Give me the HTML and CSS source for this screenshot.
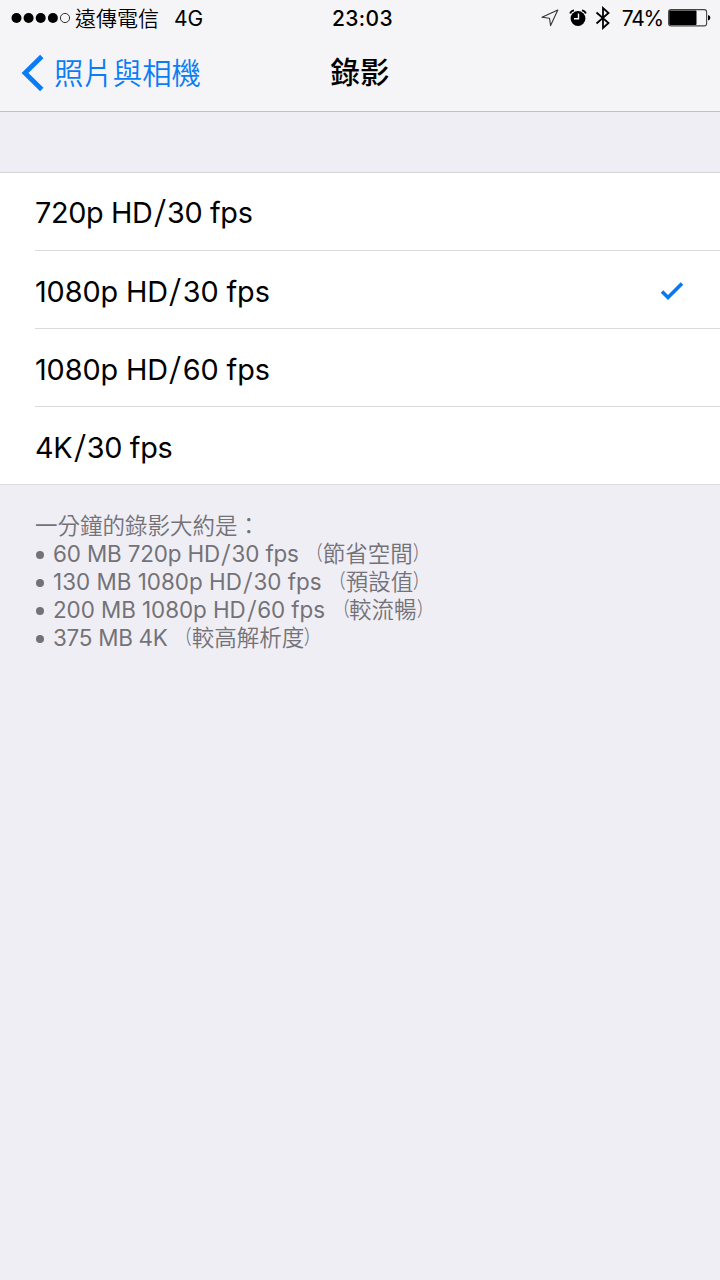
FILE: index.html
```html
<!DOCTYPE html>
<html lang="zh-Hant">
<head>
<meta charset="utf-8">
<title>錄影</title>
<link rel="stylesheet" href="styles.css">
</head>
<body>
<header class="header">
  <div class="status">
    <div class="status-left">
      <svg class="signal" width="60" height="12" viewBox="0 0 60 12">
        <circle cx="5.5" cy="6" r="5"/><circle cx="17.6" cy="6" r="5"/><circle cx="29.7" cy="6" r="5"/><circle cx="41.9" cy="6" r="5"/>
        <circle class="signal-empty" cx="54" cy="6" r="4.6"/>
      </svg>
      <span class="carrier">遠傳電信</span>
      <span class="network">4G</span>
    </div>
    <div class="clock">23:03</div>
    <div class="status-right">
      <svg class="location" width="18" height="18" viewBox="0 0 18 18"><path d="M16.8 1 L1 8.2 L8.5 9.2 L9.6 16.6 Z"/></svg>
      <svg class="alarm" width="18" height="18" viewBox="0 0 18 18">
        <circle cx="9" cy="9.5" r="7.4"/>
        <path class="alarm-bell" d="M1.2 4.5 Q2 1.8 5 1.4 M16.8 4.5 Q16 1.8 13 1.4"/>
        <path class="alarm-hand" d="M9.5 4.5 V9.8 H5"/>
      </svg>
      <svg class="bluetooth" width="16" height="24" viewBox="0 0 16 24"><path d="M1.5 6.5 L13.5 17 L8 22 V2 L13.5 7 L1.5 17.5"/></svg>
      <span class="percent">74%</span>
      <svg class="battery" width="43" height="18" viewBox="0 0 43 18">
        <rect class="battery-case" x="0.6" y="0.6" width="38" height="16.3" rx="2.5"/>
        <rect x="1.2" y="1.4" width="27.3" height="14.7" rx="1"/>
        <path d="M40 6 Q42.4 6.5 42.4 8.8 Q42.4 11 40 11.5 Z"/>
      </svg>
    </div>
  </div>
  <nav class="nav">
    <a class="back">
      <svg class="chevron" width="24" height="38" viewBox="0 0 24 38"><path d="M20.8 2.5 L4 19 L20.8 35.5"/></svg>
      <span class="back-label">照片與相機</span>
    </a>
    <h1 class="title">錄影</h1>
  </nav>
</header>
<main>
  <ul class="options">
    <li class="option"><span class="label label-720">720p HD<span class="slash">/</span>30 fps</span></li>
    <li class="option"><span class="label">1080p HD<span class="slash">/</span>30 fps</span>
      <svg class="check" width="24" height="20" viewBox="0 0 24 20"><path d="M2 10.5 L8 16.5 L22 2.5"/></svg></li>
    <li class="option"><span class="label">1080p HD<span class="slash">/</span>60 fps</span></li>
    <li class="option"><span class="label label-4k">4K<span class="slash">/</span>30 fps</span></li>
  </ul>
  <div class="notes">
    <p class="intro">一分鐘的錄影大約是：</p>
    <p class="note"><span class="dot"></span><span class="size size-720">60 MB 720p HD<span class="slash">/</span>30 fps</span><span class="hint"><span class="open">（</span>節省空間<span class="close">）</span></span></p>
    <p class="note"><span class="dot"></span><span class="size size-1080">130 MB 1080p HD<span class="slash">/</span>30 fps</span><span class="hint"><span class="open">（</span>預設值<span class="close">）</span></span></p>
    <p class="note"><span class="dot"></span><span class="size size-1080-60">200 MB 1080p HD<span class="slash">/</span>60 fps</span><span class="hint"><span class="open">（</span>較流暢<span class="close">）</span></span></p>
    <p class="note"><span class="dot"></span><span class="size">375 MB 4K</span><span class="hint"><span class="open">（</span>較高解析度<span class="close">）</span></span></p>
  </div>
</main>
</body>
</html>
```
FILE: styles.css
```css
* { box-sizing: border-box; margin: 0; padding: 0; }
body {
  width: 720px;
  min-height: 1280px;
  background: #efeef4;
  color: #000;
  font-family: Inter, "Noto Sans CJK TC", sans-serif;
}
svg { display: block; flex: none; }
.header { height: 112px; background: #f5f5f7; border-bottom: 1px solid #c0bfc4; }
.status {
  height: 35px;
  display: grid;
  grid-template-columns: 1fr auto 1fr;
  align-items: center;
  font-size: 21px;
  line-height: 35px;
  white-space: nowrap;
}
.status-left { display: flex; align-items: center; padding-left: 11px; }
.signal-empty { fill: none; stroke: #333; stroke-width: 1; }
.carrier { margin-left: 4px; padding-bottom: 3px; font-family: "Noto Sans CJK TC DemiLight", "Noto Sans CJK TC", sans-serif; font-weight: 350; line-height: 32px; }
.network { margin-left: 15px; padding-top: 1px; }
.clock { font-weight: 500; letter-spacing: 0.4px; font-size: 21px; padding: 1px 0 0 5px; }
.status-right { display: flex; align-items: center; justify-content: flex-end; padding-right: 9px; }
.location path { fill: none; stroke: #333; stroke-width: 1.1; stroke-linejoin: round; }
.alarm { margin-left: 10px; }
.alarm-bell { fill: none; stroke: #000; stroke-width: 1.8; }
.alarm-hand { fill: none; stroke: #fff; stroke-width: 1.4; }
.bluetooth { margin-left: 8px; }
.bluetooth path { fill: none; stroke: #000; stroke-width: 1.8; }
.percent { margin-left: 11px; letter-spacing: -1.2px; padding-top: 1px; }
.battery { margin-left: 5px; }
.battery-case { fill: none; stroke: #444; stroke-width: 1.1; }
.nav { height: 76px; display: grid; grid-template-columns: 1fr auto 1fr; align-items: center; }
.back { display: flex; align-items: center; padding-left: 21px; color: #0a7cf5; }
.chevron path { fill: none; stroke: #0a7cf5; stroke-width: 4.8; }
.back-label {
  margin-left: 9px;
  padding-bottom: 4px;
  font-family: "Noto Sans CJK TC DemiLight", "Noto Sans CJK TC", sans-serif;
  font-size: 29.4px;
  font-weight: 350;
  line-height: 40px;
}
.title { font-size: 29.4px; font-weight: 500; line-height: 40px; }
.options { list-style: none; margin-top: 60px; padding-left: 35px; background: #fff; border-top: 1px solid #d5d4d9; border-bottom: 1px solid #dddce1; }
.option { height: 78px; display: flex; align-items: center; justify-content: space-between; padding: 4px 36px 0 0; }
.option:first-child { height: 77px; padding-top: 3px; }
.option + .option { border-top: 1px solid #dadadc; }
.label { font-size: 28.8px; line-height: 36px; white-space: nowrap; letter-spacing: -0.1px; }
.label-720 { letter-spacing: -0.35px; }
.label-4k { letter-spacing: -0.35px; }
.slash { display: inline-block; font-weight: 300; transform: scale(1.3, 1.12); margin: 0 0.085em; }
.check { margin-bottom: 2px; }
.check path { fill: none; stroke: #0a78ee; stroke-width: 3.6; }
.notes { padding: 27px 35px 0; color: #737278; font-size: 22.5px; line-height: 28px; }
.intro {
  height: 28px;
  font-family: "Noto Sans CJK TC DemiLight", "Noto Sans CJK TC", sans-serif;
  font-weight: 350;
  line-height: 25px;
}
.note { display: flex; align-items: center; height: 28px; white-space: nowrap; }
.dot { width: 8px; height: 8px; border-radius: 50%; background: #737278; margin: 1px 9px 0 1px; }
.size { font-size: 22.4px; letter-spacing: -0.25px; }
.size-720 { letter-spacing: -0.13px; }
.size-1080 { letter-spacing: 0.02px; }
.size-1080-60 { letter-spacing: -0.05px; }
.hint {
  display: flex;
  margin-left: 1.5px;
  padding-bottom: 5px;
  font-family: "Noto Sans CJK JP DemiLight", "Noto Sans CJK JP", sans-serif;
  font-weight: 350;
}
.open, .close { width: 22.5px; font-size: 20px; }
.open { text-align: right; transform: scaleX(0.75); transform-origin: right; }
.close { transform: scaleX(0.75); transform-origin: left; }
```
